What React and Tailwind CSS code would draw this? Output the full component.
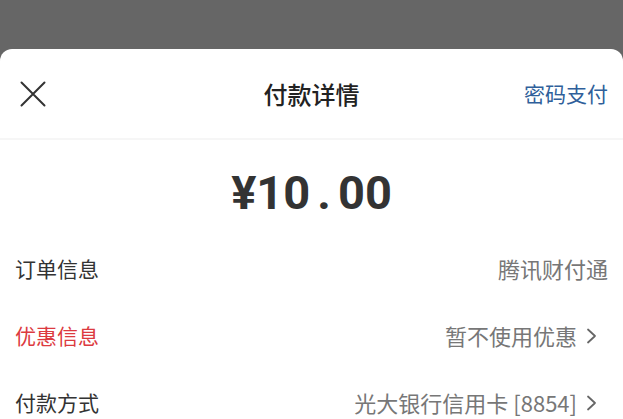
function Chevron() {
  return (
    <svg className="ml-[9px] mr-[10px] h-[18px] w-[12px] shrink-0" viewBox="0 0 12 18" fill="none">
      <path d="M2 2.5 L9 9 L2 15.5" stroke="#666" strokeWidth="1.8" strokeLinecap="round" strokeLinejoin="round" />
    </svg>
  );
}

function Row({ label, value, red, arrow }) {
  return (
    <div className="flex h-[67px] items-center justify-between px-[15px]">
      <span className={`text-[21px] ${red ? "text-[#dc3a40]" : "text-[#333]"}`}>{label}</span>
      <div className="flex items-center">
        <span className="text-[22px] text-[#777]">{value}</span>
        {arrow && <Chevron />}
      </div>
    </div>
  );
}

export default function App() {
  return (
    <div
      className="h-[419px] w-[623px] overflow-hidden bg-[#666666]"
      style={{ fontFamily: '"Noto Sans CJK SC", "Noto Sans", sans-serif' }}
    >
      <div className="h-[49px]"></div>
      <div className="h-[370px] rounded-t-[12px] bg-white">
        <div className="relative flex h-[91px] items-center justify-between border-b-2 border-[#f6f6f6] px-[15px]">
          <svg className="ml-[5px] h-[26px] w-[26px]" viewBox="0 0 26 26" fill="none">
            <path d="M1.5 1.5 L24.5 24.5 M24.5 1.5 L1.5 24.5" stroke="#333" strokeWidth="2" strokeLinecap="round" />
          </svg>
          <span className="absolute left-1/2 -translate-x-1/2 text-[24px] font-medium text-[#222]">付款详情</span>
          <span className="text-[21px] text-[#2f5f9a]">密码支付</span>
        </div>
        <div className="flex h-[95px] items-center justify-center pt-[10px]">
          <span
            className="flex items-baseline text-[47px] font-bold leading-none text-[#333]"
            style={{ fontFamily: "Roboto, sans-serif" }}
          >
            ¥10<span className="mx-[7px]">.</span>00
          </span>
        </div>
        <Row label="订单信息" value="腾讯财付通" />
        <Row label="优惠信息" value="暂不使用优惠" red arrow />
        <Row label="付款方式" value="光大银行信用卡 [8854]" arrow />
      </div>
    </div>
  );
}
